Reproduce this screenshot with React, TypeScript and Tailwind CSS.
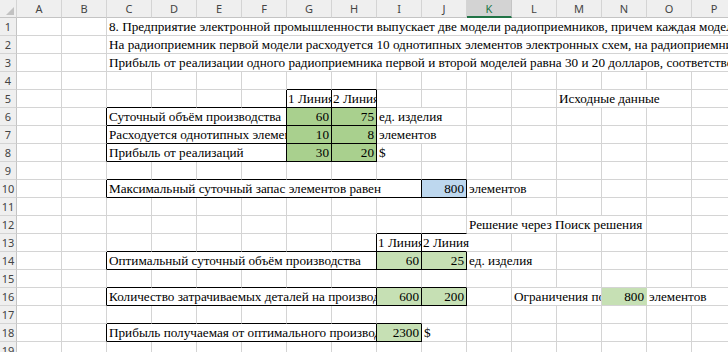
import React from 'react';

type Seg = {
  c: number;
  span?: number;
  text?: string;
  right?: boolean;
  bg?: string;
  open?: boolean;
  tight?: boolean;
};

const GREEN = 'bg-[#a9d08e]';
const LIGHT = 'bg-[#c6e0b4]';
const BLUE = 'bg-[#bdd7ee]';

const COLS = 'ABCDEFGHIJKLMNOP'.split('');

const SPAN: Record<number, string> = {
  1: 'col-span-1',
  2: 'col-span-2',
  3: 'col-span-3',
  4: 'col-span-4',
  6: 'col-span-6',
  7: 'col-span-7',
  14: 'col-span-14',
};

const ROWS: Record<number, Seg[]> = {
  1: [{ c: 2, span: 14, text: '8. Предприятие электронной промышленности выпускает две модели радиоприемников, причем каждая модель производится на отдельной технологической линии.' }],
  2: [{ c: 2, span: 14, text: 'На радиоприемник первой модели расходуется 10 однотипных элементов электронных схем, на радиоприемник второй модели — 8 таких же элементов.' }],
  3: [{ c: 2, span: 14, text: 'Прибыль от реализации одного радиоприемника первой и второй моделей равна 30 и 20 долларов, соответственно.' }],
  5: [
    { c: 6, text: '1 Линия', tight: true },
    { c: 7, text: '2 Линия', tight: true },
    { c: 12, span: 3, text: 'Исходные данные' },
  ],
  6: [
    { c: 2, span: 4, text: 'Суточный объём производства' },
    { c: 6, text: '60', right: true, bg: GREEN },
    { c: 7, text: '75', right: true, bg: GREEN },
    { c: 8, span: 2, text: 'ед. изделия' },
  ],
  7: [
    { c: 2, span: 4, text: 'Расходуется однотипных элементов' },
    { c: 6, text: '10', right: true, bg: GREEN },
    { c: 7, text: '8', right: true, bg: GREEN },
    { c: 8, span: 2, text: 'элементов' },
  ],
  8: [
    { c: 2, span: 4, text: 'Прибыль от реализаций' },
    { c: 6, text: '30', right: true, bg: GREEN },
    { c: 7, text: '20', right: true, bg: GREEN },
    { c: 8, text: '$' },
  ],
  10: [
    { c: 2, span: 7, text: 'Максимальный суточный запас элементов равен' },
    { c: 9, text: '800', right: true, bg: BLUE },
    { c: 10, span: 2, text: 'элементов' },
  ],
  12: [{ c: 10, span: 4, text: 'Решение через Поиск решения' }],
  13: [
    { c: 8, text: '1 Линия', tight: true },
    { c: 9, text: '2 Линия', open: true, tight: true },
  ],
  14: [
    { c: 2, span: 6, text: 'Оптимальный суточный объём производства' },
    { c: 8, text: '60', right: true, bg: LIGHT },
    { c: 9, text: '25', right: true, bg: LIGHT },
    { c: 10, span: 2, text: 'ед. изделия' },
  ],
  16: [
    { c: 2, span: 6, text: 'Количество затрачиваемых деталей на производство' },
    { c: 8, text: '600', right: true, bg: LIGHT },
    { c: 9, text: '200', right: true, bg: LIGHT },
    { c: 11, span: 2, text: 'Ограничения по ресурсам' },
    { c: 13, text: '800', right: true, bg: LIGHT },
    { c: 14, span: 2, text: 'элементов' },
  ],
  18: [
    { c: 2, span: 6, text: 'Прибыль получаемая от оптимального производства' },
    { c: 8, text: '2300', right: true, bg: LIGHT },
    { c: 9, text: '$' },
  ],
};

// black edges: right edge of column k in row r, bottom edge of column c in row r
const vBlack = new Set<string>();
const hBlack = new Set<string>();

function box(r: number, c1: number, c2: number) {
  for (let c = c1; c <= c2; c++) {
    hBlack.add(`${r - 1}:${c}`);
    hBlack.add(`${r}:${c}`);
  }
  vBlack.add(`${r}:${c1 - 1}`);
  vBlack.add(`${r}:${c2}`);
}

box(5, 6, 6);
box(5, 7, 7);
for (const r of [6, 7, 8]) {
  box(r, 2, 5);
  box(r, 6, 6);
  box(r, 7, 7);
}
box(10, 2, 8);
box(10, 9, 9);
hBlack.add('12:8');
hBlack.add('12:9');
vBlack.add('13:7');
vBlack.add('13:8');
for (const r of [14, 16]) {
  box(r, 2, 7);
  box(r, 8, 8);
  box(r, 9, 9);
}
box(18, 2, 7);
box(18, 8, 8);

function segments(r: number): Seg[] {
  const given = ROWS[r] ?? [];
  const out: Seg[] = [];
  let c = 0;
  while (c < COLS.length) {
    const s = given.find((g) => g.c === c);
    if (s) {
      out.push(s);
      c += s.span ?? 1;
    } else {
      out.push({ c });
      c += 1;
    }
  }
  return out;
}

function Cell({ r, s }: { r: number; s: Seg }) {
  const last = s.c + (s.span ?? 1) - 1;
  const rightBlack = vBlack.has(`${r}:${last}`);
  const bottomBlack = hBlack.has(`${r}:${s.c}`);
  const rightCls = rightBlack
    ? 'border-r-black'
    : s.open
      ? 'border-r-transparent'
      : s.bg === LIGHT && s.c === 13
        ? 'border-r-[#c6e0b4]'
        : 'border-r-[#d4d4d4]';
  const bottomCls = bottomBlack ? 'border-b-black' : 'border-b-[#d4d4d4]';
  return (
    <div
      className={`${SPAN[s.span ?? 1]} ${s.bg ?? ''} ${rightCls} ${bottomCls} h-[18px] border-r border-b ${
        s.tight ? 'pl-[1px] pr-0' : 'px-[2px]'
      } flex items-end whitespace-nowrap leading-[16px] ${
        s.open ? 'overflow-visible relative z-10' : 'overflow-hidden'
      } ${s.right ? 'justify-end' : 'justify-start'}`}
    >
      {s.text}
    </div>
  );
}

function HeaderRow() {
  return (
    <div className="grid grid-cols-[17px_repeat(16,45px)] h-[18px] bg-[#efefef] font-['Noto_Sans',sans-serif] text-[11px] text-[#444]">
      <div className="border-r border-b border-r-[#d4d4d4] border-b-[#c4c4c4] flex items-end justify-end p-[2px]">
        <svg width="8" height="8" viewBox="0 0 8 8">
          <polygon points="8,0 8,8 0,8" fill="#c2c2c2" />
        </svg>
      </div>
      {COLS.map((l) =>
        l === 'K' ? (
          <div
            key={l}
            className="bg-[#d3d3d3] border-r border-r-[#c4c4c4] border-b-2 border-b-[#217346] text-[#217346] flex items-center justify-center leading-none"
          >
            {l}
          </div>
        ) : (
          <div
            key={l}
            className="border-r border-b border-r-[#d4d4d4] border-b-[#c4c4c4] flex items-center justify-center leading-none"
          >
            {l}
          </div>
        ),
      )}
    </div>
  );
}

export default function App() {
  const rows = Array.from({ length: 19 }, (_, i) => i + 1);
  return (
    <div className="w-[728px] h-[352px] overflow-hidden bg-white">
      <div className="w-[737px]">
        <HeaderRow />
        {rows.map((r) => (
          <div
            key={r}
            className="grid grid-cols-[17px_repeat(16,45px)] h-[18px] text-[13.2px] text-black font-['Liberation_Serif',serif]"
          >
            <div className="bg-[#efefef] border-r border-b border-r-[#c4c4c4] border-b-[#d4d4d4] flex items-center justify-center font-['Noto_Sans',sans-serif] text-[11px] text-[#444] leading-none">
              {r}
            </div>
            {segments(r).map((s) => (
              <Cell key={s.c} r={r} s={s} />
            ))}
          </div>
        ))}
      </div>
    </div>
  );
}
